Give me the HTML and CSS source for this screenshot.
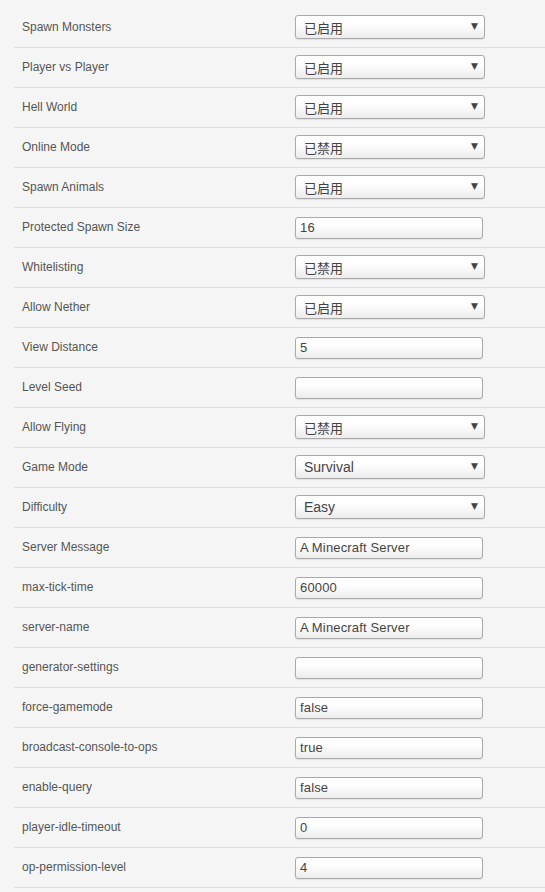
FILE: index.html
```html
<!DOCTYPE html>
<html>
<head>
<meta charset="utf-8">
<link rel="stylesheet" href="styles.css">
</head>
<body>
<div class="page">
  <div class="table">
    <div class="row"><div class="label">Spawn Monsters</div><div class="ctrl"><div class="sel">已启用<span class="arr">▼</span></div></div></div>
    <div class="row"><div class="label">Player vs Player</div><div class="ctrl"><div class="sel">已启用<span class="arr">▼</span></div></div></div>
    <div class="row"><div class="label">Hell World</div><div class="ctrl"><div class="sel">已启用<span class="arr">▼</span></div></div></div>
    <div class="row"><div class="label">Online Mode</div><div class="ctrl"><div class="sel">已禁用<span class="arr">▼</span></div></div></div>
    <div class="row"><div class="label">Spawn Animals</div><div class="ctrl"><div class="sel">已启用<span class="arr">▼</span></div></div></div>
    <div class="row"><div class="label">Protected Spawn Size</div><div class="ctrl"><div class="inp">16</div></div></div>
    <div class="row"><div class="label">Whitelisting</div><div class="ctrl"><div class="sel">已禁用<span class="arr">▼</span></div></div></div>
    <div class="row"><div class="label">Allow Nether</div><div class="ctrl"><div class="sel">已启用<span class="arr">▼</span></div></div></div>
    <div class="row"><div class="label">View Distance</div><div class="ctrl"><div class="inp">5</div></div></div>
    <div class="row"><div class="label">Level Seed</div><div class="ctrl"><div class="inp"></div></div></div>
    <div class="row"><div class="label">Allow Flying</div><div class="ctrl"><div class="sel">已禁用<span class="arr">▼</span></div></div></div>
    <div class="row"><div class="label">Game Mode</div><div class="ctrl"><div class="sel latin">Survival<span class="arr">▼</span></div></div></div>
    <div class="row"><div class="label">Difficulty</div><div class="ctrl"><div class="sel latin">Easy<span class="arr">▼</span></div></div></div>
    <div class="row"><div class="label">Server Message</div><div class="ctrl"><div class="inp">A Minecraft Server</div></div></div>
    <div class="row"><div class="label">max-tick-time</div><div class="ctrl"><div class="inp">60000</div></div></div>
    <div class="row"><div class="label">server-name</div><div class="ctrl"><div class="inp">A Minecraft Server</div></div></div>
    <div class="row"><div class="label">generator-settings</div><div class="ctrl"><div class="inp"></div></div></div>
    <div class="row"><div class="label">force-gamemode</div><div class="ctrl"><div class="inp">false</div></div></div>
    <div class="row"><div class="label">broadcast-console-to-ops</div><div class="ctrl"><div class="inp">true</div></div></div>
    <div class="row"><div class="label">enable-query</div><div class="ctrl"><div class="inp">false</div></div></div>
    <div class="row"><div class="label">player-idle-timeout</div><div class="ctrl"><div class="inp">0</div></div></div>
    <div class="row"><div class="label">op-permission-level</div><div class="ctrl"><div class="inp">4</div></div></div>
  </div>
</div>
</body>
</html>
```
FILE: styles.css
```css
html, body {
  margin: 0;
  padding: 0;
  background: #f5f5f5;
}
.page {
  padding: 8px 0 0 14px;
  border-left: 1px solid #ececec;
  min-height: 892px;
  box-sizing: border-box;
  margin-left: -1px;
}
.table {
  display: flex;
  flex-direction: column;
}
.row {
  display: flex;
  align-items: center;
  height: 39px;
  border-bottom: 1px solid #dedede;
}
.label {
  width: 273px;
  padding-left: 8px;
  padding-bottom: 2px;
  font-family: "Liberation Sans", Arial, sans-serif;
  font-size: 12px;
  color: #555;
}
.ctrl {
  display: flex;
  align-items: center;
}
.sel, .inp {
  box-sizing: border-box;
  border: 1px solid #a9a9a9;
  border-radius: 3px;
  background: linear-gradient(#ffffff 0%, #ffffff 35%, #ececec 100%);
  box-shadow: 0 1px 1px rgba(0,0,0,0.08);
  color: #444;
  font-family: "Liberation Sans", "Noto Sans CJK SC", Arial, sans-serif;
  font-size: 13px;
  display: flex;
  align-items: center;
}
.sel {
  position: relative;
  width: 190px;
  height: 24px;
  padding-left: 8px;
  margin-top: -1px;
}
.sel.latin {
  font-size: 14px;
}
.inp {
  width: 188px;
  height: 22px;
  padding-left: 4px;
  margin-top: 0;
  font-size: 13px;
  letter-spacing: 0.15px;
}
.arr {
  position: absolute;
  right: 6px;
  top: 5px;
  font-size: 9px;
  color: #444;
  font-family: "DejaVu Sans", sans-serif;
}
```
